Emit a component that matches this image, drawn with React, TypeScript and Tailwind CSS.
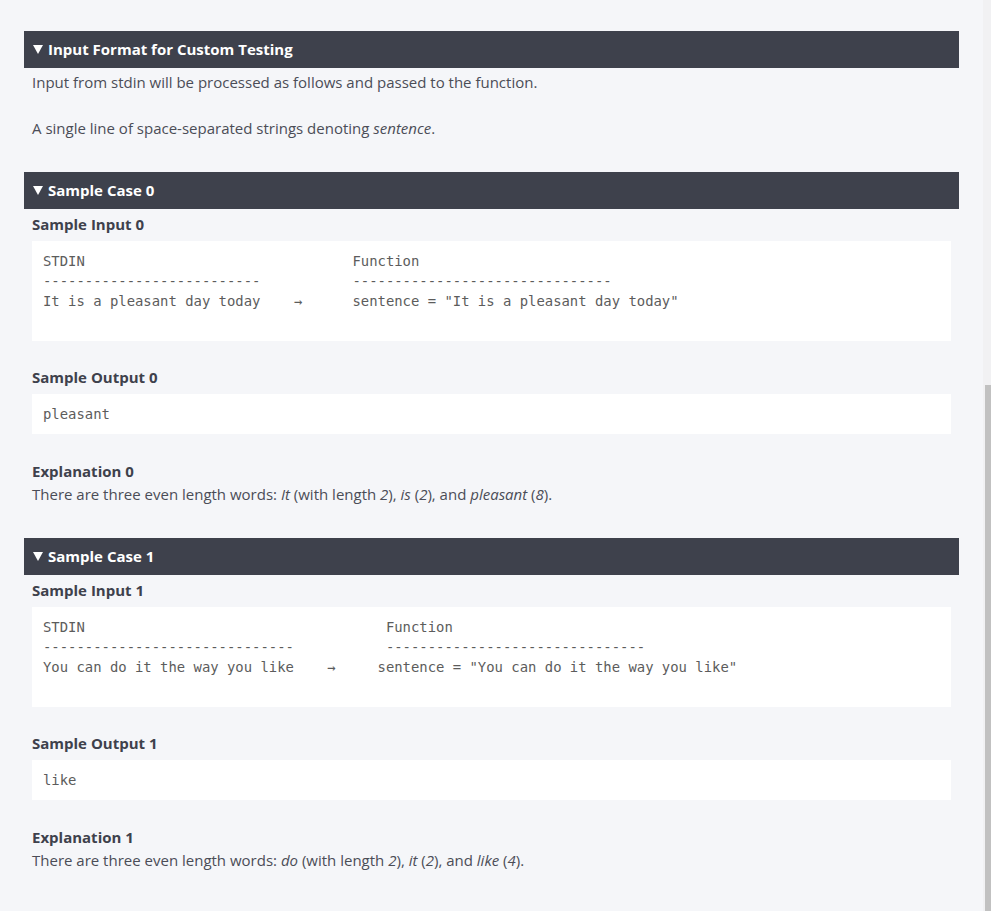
import React from 'react'

// Problem statement fragment: input format + sample cases

const sans = "font-['Open_Sans','Liberation_Sans',sans-serif]"
const mono = "font-['DejaVu_Sans_Mono','Liberation_Mono',monospace]"

interface SampleCase {
  index: number
  input: string
  output: string
  explanation: React.ReactNode
}

const cases: SampleCase[] = [
  {
    index: 0,
    input:
      'STDIN                                Function\n' +
      '--------------------------           -------------------------------\n' +
      'It is a pleasant day today    \u2192      sentence = "It is a pleasant day today"\n\n',
    output: 'pleasant',
    explanation: (
      <>
        There are three even length words: <i>It</i> (with length <i>2</i>), <i>is</i> (<i>2</i>), and{' '}
        <i>pleasant</i> (<i>8</i>).
      </>
    ),
  },
  {
    index: 1,
    input:
      'STDIN                                    Function\n' +
      '------------------------------           -------------------------------\n' +
      'You can do it the way you like    \u2192     sentence = "You can do it the way you like"\n\n',
    output: 'like',
    explanation: (
      <>
        There are three even length words: <i>do</i> (with length <i>2</i>), <i>it</i> (<i>2</i>), and{' '}
        <i>like</i> (<i>4</i>).
      </>
    ),
  },
]

function SectionHeader({ title }: { title: string }) {
  return (
    <div className="h-[37px] bg-[#3e414c] flex items-center pl-[9px] text-white">
      <svg width="10" height="9" viewBox="0 0 10 9" className="mr-[5px]">
        <polygon points="0,0 10,0 5,9" fill="currentColor" />
      </svg>
      <span className="text-[15px] font-bold">{title}</span>
    </div>
  )
}

function Label({ children }: { children: React.ReactNode }) {
  return <div className="text-[15px] font-bold leading-[20px] text-[#3e414c]">{children}</div>
}

function CodeBlock({ text }: { text: string }) {
  return (
    <pre className={`${mono} bg-white px-[11px] py-[10px] text-[13.9px] leading-[20px] text-[#5c5c5c] whitespace-pre`}>
      {text}
    </pre>
  )
}

function SampleSection({ data }: { data: SampleCase }) {
  return (
    <section className="mt-[33px]">
      <SectionHeader title={`Sample Case ${data.index}`} />
      <div className="px-[8px]">
        <div className="mt-[5px]">
          <Label>Sample Input {data.index}</Label>
        </div>
        <div className="mt-[7px]">
          <CodeBlock text={data.input} />
        </div>
        <div className="mt-[26px]">
          <Label>Sample Output {data.index}</Label>
        </div>
        <div className="mt-[7px]">
          <CodeBlock text={data.output} />
        </div>
        <div className="mt-[27px]">
          <Label>Explanation {data.index}</Label>
        </div>
        <p className="text-[15px] leading-[22px] text-[#4b4d57] mt-[2px]">{data.explanation}</p>
      </div>
    </section>
  )
}

export default function App() {
  return (
    <div className={`${sans} flex w-full h-[911px] bg-[#f5f6f9] overflow-hidden`}>
      <main className="flex-1 pl-[24px] pr-[24px] pt-[31px] border-l-[10px] border-[#f7f7fa] -ml-[10px]">
        <section>
          <SectionHeader title="Input Format for Custom Testing" />
          <div className="px-[8px] text-[15px] leading-[22px] text-[#4b4d57]">
            <p className="mt-[3px]">Input from stdin will be processed as follows and passed to the function.</p>
            <p className="mt-[24px]">
              A single line of space-separated strings denoting <i>sentence</i>.
            </p>
          </div>
        </section>
        {cases.map((c) => (
          <SampleSection key={c.index} data={c} />
        ))}
      </main>
      <div className="w-[8px] bg-[#f1f1f3] flex flex-col">
        <div className="h-[385px]" />
        <div className="flex-1 ml-[2px] bg-[#c1c1c1]" />
      </div>
    </div>
  )
}
